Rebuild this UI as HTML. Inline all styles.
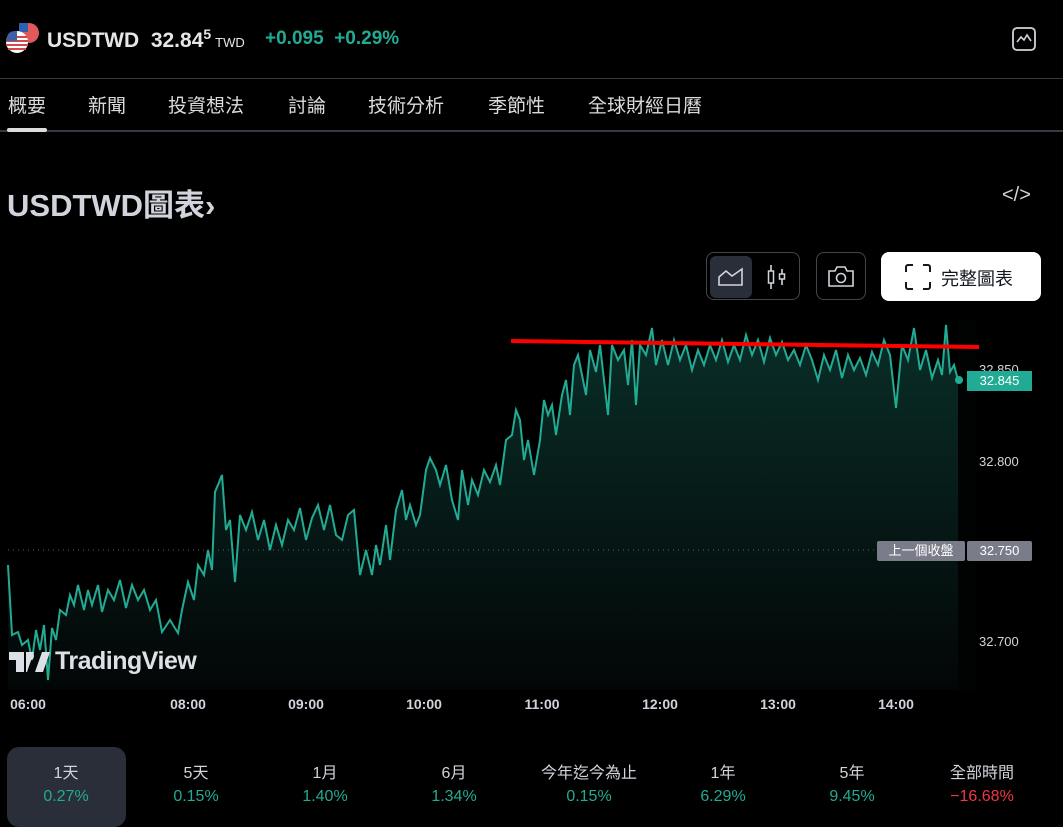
<!DOCTYPE html>
<html><head><meta charset="utf-8"><style>
body{margin:0;background:#000;width:1063px;height:820px;overflow:hidden;font-family:"Liberation Sans","Noto Sans CJK TC",sans-serif;color:#d1d4dc;position:relative}
.a{position:absolute;white-space:nowrap}
.tab{position:absolute;top:91px;font-size:19px;color:#dbdbdb}
.t{position:absolute;top:696px;font-size:14px;font-weight:bold;color:#d1d4dc;transform:translateX(-50%)}
.p{position:absolute;font-size:13px;color:#d1d4dc;left:979px}
.per{position:absolute;top:762px;width:120px;text-align:center;font-size:16px;line-height:23px;transform:translateX(-50%)}
.per b{display:block;font-weight:normal;color:#d1d4dc}
.per i{display:block;font-style:normal;color:#22ab94;font-size:16px}
</style></head><body>
<svg class="a" style="left:5px;top:22px" width="36" height="34" viewBox="0 0 36 34">
<circle cx="24" cy="11" r="10" fill="#e05a5a"/><rect x="14" y="1" width="9" height="9" fill="#2e5fb0"/>
<circle cx="12" cy="20" r="11" fill="#fff"/><path d="M2 15h20M1 19h22M1 23h22M3 27h18" stroke="#d04848" stroke-width="2"/><path d="M3 12a11 11 0 0 1 9-3v10H1z" fill="#3c5fa6"/>
</svg>
<div class="a" style="left:47px;top:26px;font-size:21px;font-weight:bold;color:#e6e6e6">USDTWD&nbsp; 32.84<span style="font-size:14px;vertical-align:8px">5</span><span style="font-size:13px;font-weight:normal;margin-left:4px">TWD</span></div>
<div class="a" style="left:265px;top:28px;font-size:19px;color:#22ab94;font-weight:bold">+0.095&nbsp; +0.29%</div>
<svg class="a" style="left:1011px;top:26px" width="26" height="26" viewBox="0 0 26 26"><rect x="2" y="2" width="22" height="22" rx="4" fill="none" stroke="#d1d4dc" stroke-width="1.8"/><path d="M6 16l4-5 3 3 3-5 4 6" fill="none" stroke="#d1d4dc" stroke-width="1.6"/></svg>
<div class="a" style="left:0;top:78px;width:1063px;height:1px;background:#363a45"></div>
<div class="tab" style="left:8px">概要</div><div class="tab" style="left:88px">新聞</div><div class="tab" style="left:168px">投資想法</div><div class="tab" style="left:288px">討論</div><div class="tab" style="left:368px">技術分析</div><div class="tab" style="left:488px">季節性</div><div class="tab" style="left:588px">全球財經日曆</div>
<div class="a" style="left:0;top:130px;width:1063px;height:2px;background:#363a45"></div>
<div class="a" style="left:7px;top:128px;width:40px;height:4px;background:#dbdbdb;border-radius:2px"></div>
<div class="a" style="left:7px;top:180px;font-size:31px;font-weight:bold;color:#d1d4dc">USDTWD圖表›</div>
<div class="a" style="left:1002px;top:184px;font-size:20px;color:#d1d4dc">&lt;/&gt;</div>
<div class="a" style="left:706px;top:252px;width:94px;height:48px;border:1px solid #434651;border-radius:8px;box-sizing:border-box"></div>
<div class="a" style="left:710px;top:256px;width:42px;height:42px;background:#2a2e39;border-radius:6px"></div>
<svg class="a" style="left:718px;top:266px" width="26" height="20"><path d="M1 19V11l7-6 6 5 10-7v16z" fill="none" stroke="#d1d4dc" stroke-width="1.6"/></svg>
<svg class="a" style="left:766px;top:264px" width="22" height="26"><path d="M5 1v24M16 5v16" stroke="#d1d4dc" stroke-width="1.6"/><rect x="2.5" y="7" width="5" height="12" fill="#000" stroke="#d1d4dc" stroke-width="1.5"/><rect x="13.5" y="10" width="5" height="5" fill="#000" stroke="#d1d4dc" stroke-width="1.5"/></svg>
<div class="a" style="left:816px;top:252px;width:50px;height:48px;border:1px solid #434651;border-radius:8px;box-sizing:border-box"></div>
<svg class="a" style="left:827px;top:264px" width="28" height="24"><path d="M2 7h6l2-4h8l2 4h6v15H2z" fill="none" stroke="#d1d4dc" stroke-width="1.6"/><circle cx="14" cy="14" r="4.5" fill="none" stroke="#d1d4dc" stroke-width="1.6"/></svg>
<div class="a" style="left:881px;top:252px;width:160px;height:49px;background:#fff;border-radius:8px"></div>
<svg class="a" style="left:905px;top:264px" width="26" height="26"><path d="M1 8V3a2 2 0 0 1 2-2h5M18 1h5a2 2 0 0 1 2 2v5M25 18v5a2 2 0 0 1-2 2h-5M8 25H3a2 2 0 0 1-2-2v-5" fill="none" stroke="#131722" stroke-width="2"/></svg>
<div class="a" style="left:941px;top:265px;font-size:18px;color:#131722">完整圖表</div>
<svg class="a" style="left:0;top:0" width="1063" height="820">
<defs><linearGradient id="g" x1="0" y1="0" x2="0" y2="1"><stop offset="0" stop-color="#0a2e28"/><stop offset="1" stop-color="#020606"/></linearGradient></defs>
<rect x="958" y="320" width="18" height="370" fill="#010303"/>
<path id="ln" d="M8 565L12 635L18 632L22 645L28 640L32 660L36 630L40 650L44 625L48 680L52 628L56 640L60 610L66 615L70 595L74 605L78 585L84 610L88 590L92 605L98 585L102 612L108 590L114 600L120 580L126 608L132 585L138 600L144 590L150 610L156 600L162 632L170 620L178 633L182 610L188 582L194 600L198 565L204 575L208 550L212 570L215 492L222 475L226 530L230 520L235 582L240 515L246 530L252 512L258 540L264 520L270 550L276 525L282 545L288 520L294 530L300 508L306 540L312 518L318 505L324 530L330 505L336 535L342 540L348 515L354 510L360 575L366 550L372 575L376 545L380 565L386 525L390 560L396 510L402 490L406 520L410 505L416 525L420 515L426 470L430 458L436 470L440 485L446 465L452 500L458 520L462 470L468 505L472 480L478 495L484 470L490 482L496 465L500 485L506 440L512 435L516 410L520 420L524 460L528 440L534 475L540 440L544 400L548 415L552 405L556 435L562 395L566 380L570 415L574 365L578 355L582 375L586 395L590 350L596 372L600 345L604 380L608 415L612 345L618 360L624 350L628 385L632 340L636 405L640 345L646 355L652 328L656 365L662 340L668 365L674 340L680 360L686 345L692 370L698 350L704 365L710 345L716 360L722 340L728 362L734 345L740 360L746 335L752 355L758 340L764 362L770 338L776 355L782 342L788 360L794 350L800 365L806 345L812 360L818 380L824 355L830 370L836 350L842 378L848 355L854 370L860 358L866 375L872 352L878 365L884 340L890 355L896 408L902 345L908 360L914 328L920 370L926 350L932 378L938 360L942 375L946 325L950 372L954 365L958 380"/>
<path d="M8 565L12 635L18 632L22 645L28 640L32 660L36 630L40 650L44 625L48 680L52 628L56 640L60 610L66 615L70 595L74 605L78 585L84 610L88 590L92 605L98 585L102 612L108 590L114 600L120 580L126 608L132 585L138 600L144 590L150 610L156 600L162 632L170 620L178 633L182 610L188 582L194 600L198 565L204 575L208 550L212 570L215 492L222 475L226 530L230 520L235 582L240 515L246 530L252 512L258 540L264 520L270 550L276 525L282 545L288 520L294 530L300 508L306 540L312 518L318 505L324 530L330 505L336 535L342 540L348 515L354 510L360 575L366 550L372 575L376 545L380 565L386 525L390 560L396 510L402 490L406 520L410 505L416 525L420 515L426 470L430 458L436 470L440 485L446 465L452 500L458 520L462 470L468 505L472 480L478 495L484 470L490 482L496 465L500 485L506 440L512 435L516 410L520 420L524 460L528 440L534 475L540 440L544 400L548 415L552 405L556 435L562 395L566 380L570 415L574 365L578 355L582 375L586 395L590 350L596 372L600 345L604 380L608 415L612 345L618 360L624 350L628 385L632 340L636 405L640 345L646 355L652 328L656 365L662 340L668 365L674 340L680 360L686 345L692 370L698 350L704 365L710 345L716 360L722 340L728 362L734 345L740 360L746 335L752 355L758 340L764 362L770 338L776 355L782 342L788 360L794 350L800 365L806 345L812 360L818 380L824 355L830 370L836 350L842 378L848 355L854 370L860 358L866 375L872 352L878 365L884 340L890 355L896 408L902 345L908 360L914 328L920 370L926 350L932 378L938 360L942 375L946 325L950 372L954 365L958 380L958 690L8 690Z" fill="url(#g)"/>
<use href="#ln" fill="none" stroke="#22ab94" stroke-width="2"/>
<line x1="8" y1="550" x2="876" y2="550" stroke="#5d606b" stroke-dasharray="1 4"/>
<line x1="511" y1="341" x2="979" y2="347" stroke="#ff0000" stroke-width="4"/>
<circle cx="959" cy="380" r="4" fill="#22ab94"/>
</svg>
<div class="p" style="top:362px">32.850</div>
<div class="a" style="left:967px;top:371px;width:65px;height:20px;background:#22ab94;color:#fff;font-size:13px;text-align:center;line-height:20px">32.845</div>
<div class="p" style="top:454px">32.800</div>
<div class="a" style="left:877px;top:541px;width:88px;height:20px;background:#7a7d89;border-radius:2px;color:#fff;font-size:13px;text-align:center;line-height:20px">上一個收盤</div>
<div class="a" style="left:967px;top:541px;width:65px;height:20px;background:#7a7d89;border-radius:2px;color:#fff;font-size:13px;text-align:center;line-height:20px">32.750</div>
<div class="p" style="top:634px">32.700</div>
<svg class="a" style="left:9px;top:651px" width="42" height="22"><path d="M0 1h15v20H7V9H0z M17 1h8l-7 20h-1z" fill="#dde0e6"/><circle cx="21" cy="5" r="4" fill="#dde0e6"/><path d="M26 21L33 1h8l-7 20z" fill="#dde0e6"/></svg>
<div class="a" style="left:55px;top:647px;font-size:25px;font-weight:bold;color:#dde0e6;letter-spacing:-0.5px">TradingView</div>
<div class="t" style="left:28px">06:00</div><div class="t" style="left:188px">08:00</div><div class="t" style="left:306px">09:00</div><div class="t" style="left:424px">10:00</div><div class="t" style="left:542px">11:00</div><div class="t" style="left:660px">12:00</div><div class="t" style="left:778px">13:00</div><div class="t" style="left:896px">14:00</div>
<div class="a" style="left:7px;top:747px;width:119px;height:80px;background:#2a2e39;border-radius:12px"></div>
<div class="per" style="left:66px"><b>1天</b><i>0.27%</i></div>
<div class="per" style="left:196px"><b>5天</b><i>0.15%</i></div>
<div class="per" style="left:325px"><b>1月</b><i>1.40%</i></div>
<div class="per" style="left:454px"><b>6月</b><i>1.34%</i></div>
<div class="per" style="left:589px;width:140px"><b>今年迄今為止</b><i>0.15%</i></div>
<div class="per" style="left:723px"><b>1年</b><i>6.29%</i></div>
<div class="per" style="left:852px"><b>5年</b><i>9.45%</i></div>
<div class="per" style="left:982px"><b>全部時間</b><i style="color:#f23645">−16.68%</i></div>
</body></html>
